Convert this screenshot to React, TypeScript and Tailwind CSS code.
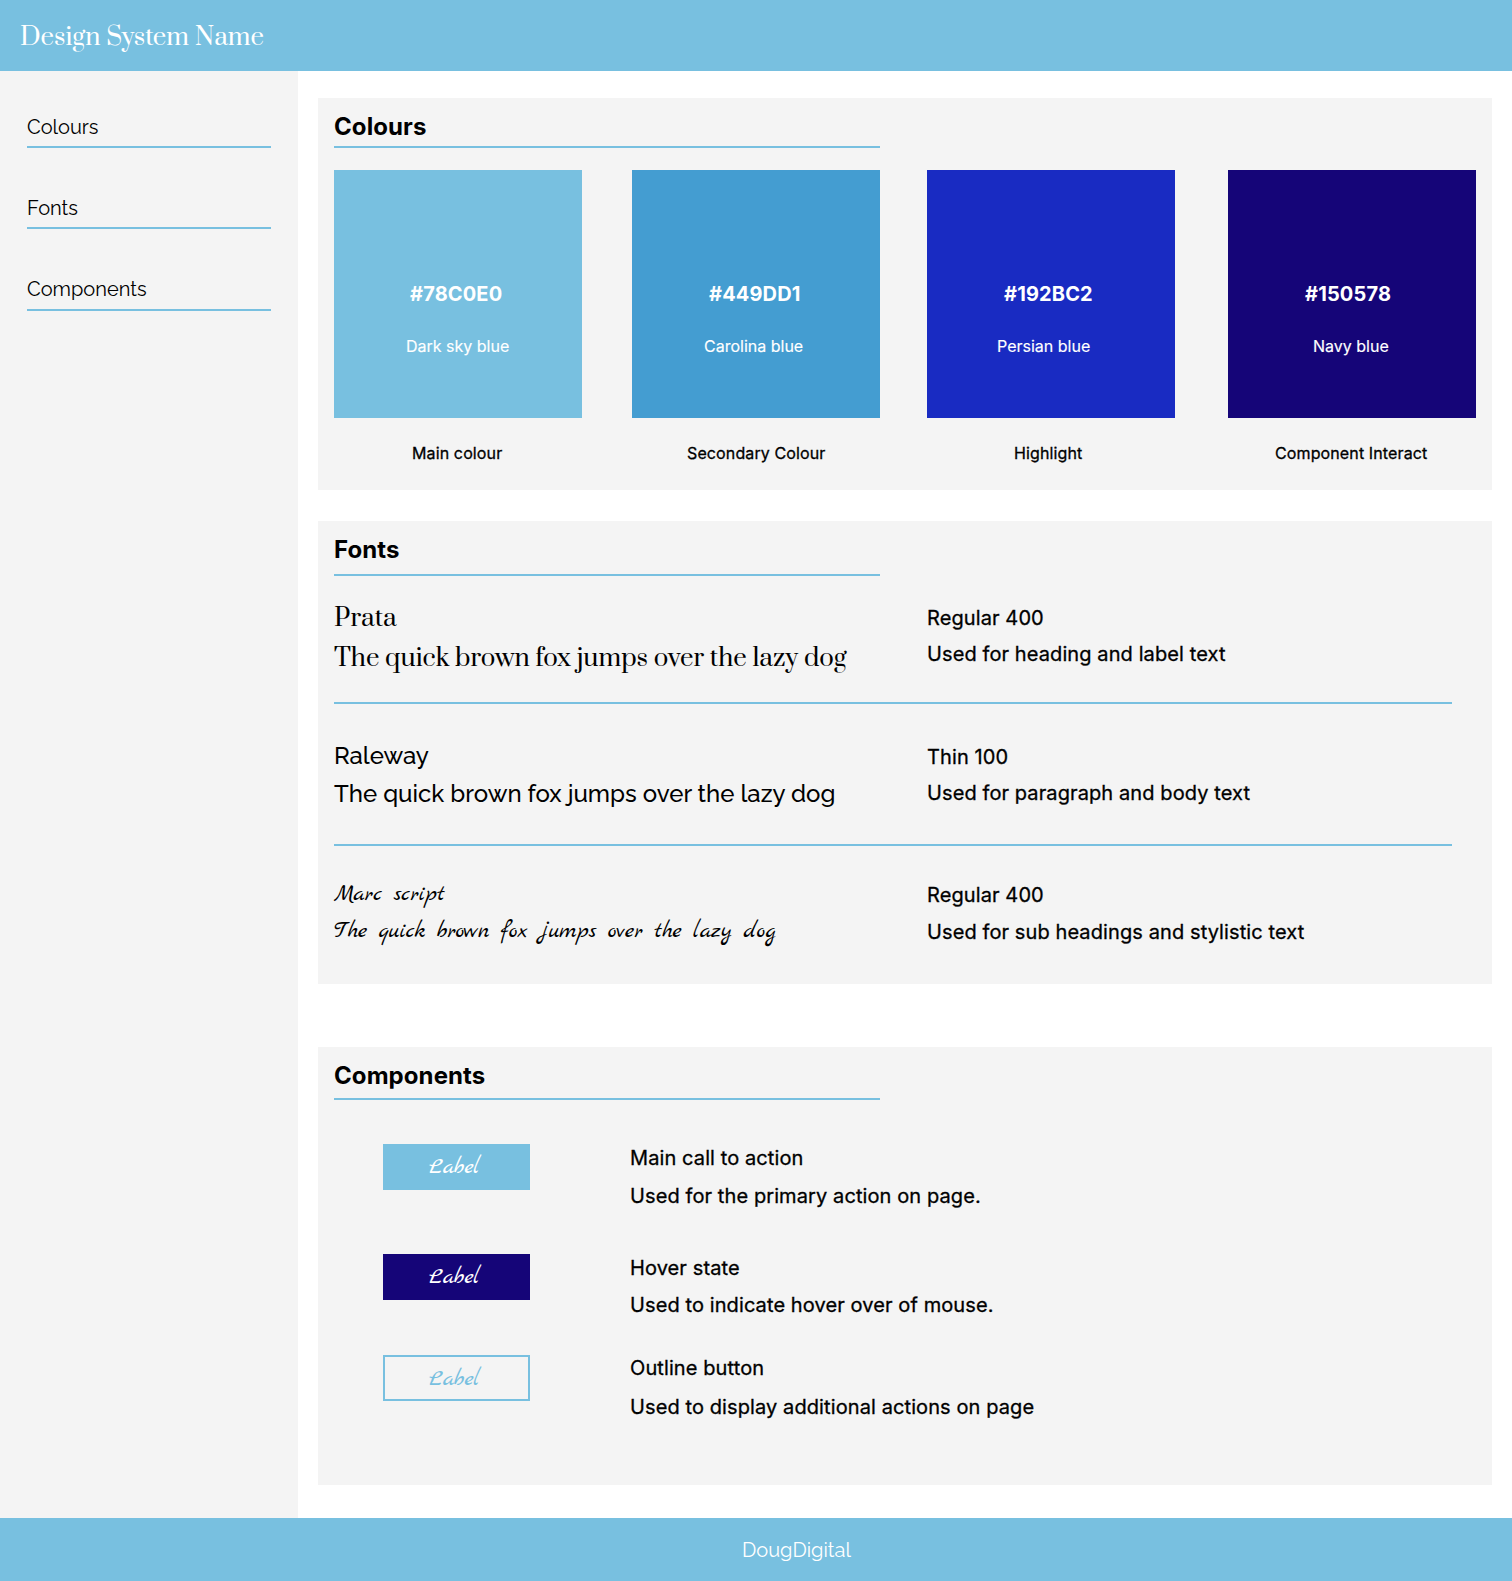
const PANGRAM = "The quick brown fox jumps over the lazy dog";

const swatches = [
  {
    hex: "#78C0E0",
    name: "Dark sky blue",
    role: "Main colour",
    fill: "bg-[#78C0E0]",
    column: "",
    hexInset: "pl-[76px]",
    nameInset: "pl-[72px]",
    roleInset: "pl-[78px]",
  },
  {
    hex: "#449DD1",
    name: "Carolina blue",
    role: "Secondary Colour",
    fill: "bg-[#449DD1]",
    column: "ml-[50px]",
    hexInset: "pl-[77px]",
    nameInset: "pl-[72px]",
    roleInset: "pl-[55px]",
  },
  {
    hex: "#192BC2",
    name: "Persian blue",
    role: "Highlight",
    fill: "bg-[#192BC2]",
    column: "ml-[47px]",
    hexInset: "pl-[77px]",
    nameInset: "pl-[70px]",
    roleInset: "pl-[87px]",
  },
  {
    hex: "#150578",
    name: "Navy blue",
    role: "Component Interact",
    fill: "bg-[#150578]",
    column: "ml-[53px]",
    hexInset: "pl-[77px]",
    nameInset: "pl-[85px]",
    roleInset: "pl-[47px]",
  },
];

const prata = "font-[Prata,'Liberation_Serif',serif]";
const raleway = "font-[Raleway,Lato,sans-serif]";
const marck = "font-['Marck_Script',cursive]";
const body =
  "text-[20px] leading-6 font-normal tracking-[0.1px] [-webkit-text-stroke:0.3px_currentColor]";

function NavLink({ label, className = "" }: { label: string; className?: string }) {
  return (
    <a
      className={`block border-b-2 border-[#78C0E0] text-[20px] leading-6 ${raleway} ${className}`}
    >
      {label}
    </a>
  );
}

function SectionTitle({ children, className }: { children: string; className: string }) {
  return (
    <h2
      className={`w-[546px] border-b-2 border-[#78C0E0] text-[24px] leading-[29px] font-bold tracking-[0.08px] ${className}`}
    >
      {children}
    </h2>
  );
}

function LabelButton({ className }: { className: string }) {
  return (
    <button
      className={`h-[46px] w-[147px] pr-[4px] text-[24px] leading-[30px] font-normal ${marck} ${className}`}
    >
      Label
    </button>
  );
}

export default function App() {
  return (
    <div className="flex h-[1581px] w-[1512px] flex-col bg-white font-[Inter,sans-serif] text-black">
      <header className="h-[71px] shrink-0 bg-[#78C0E0] pt-[21px] pl-[20px]">
        <h1 className={`text-[24px] leading-[33px] text-white ${prata}`}>Design System Name</h1>
      </header>

      <div className="flex min-h-0 flex-1">
        <nav className="w-[298px] shrink-0 bg-[#F4F4F4] px-[27px] pt-[44px]">
          <NavLink label="Colours" className="pb-[7px]" />
          <NavLink label="Fonts" className="mt-12 pb-[7px]" />
          <NavLink label="Components" className="mt-12 pb-2" />
        </nav>

        <main className="ml-5 w-[1174px] pt-[27px]">
          <section className="h-[392px] bg-[#F4F4F4] px-4 pt-[14px]">
            <SectionTitle className="pb-[5px]">Colours</SectionTitle>
            <div className="mt-[22px] flex">
              {swatches.map((s) => (
                <div key={s.hex} className={`w-[248px] shrink-0 ${s.column}`}>
                  <div className={`h-[248px] pt-[112px] text-white ${s.fill}`}>
                    <p
                      className={`text-[20px] leading-6 font-bold tracking-[0.15px] ${s.hexInset}`}
                    >
                      {s.hex}
                    </p>
                    <p
                      className={`mt-[30px] text-[16px] leading-5 [-webkit-text-stroke:0.15px_currentColor] ${s.nameInset}`}
                    >
                      {s.name}
                    </p>
                  </div>
                  <p
                    className={`mt-[25px] text-[16px] leading-5 tracking-[0.12px] [-webkit-text-stroke:0.3px_currentColor] ${s.roleInset}`}
                  >
                    {s.role}
                  </p>
                </div>
              ))}
            </div>
          </section>

          <section className="mt-[31px] h-[463px] bg-[#F4F4F4] px-4 pt-[14px]">
            <SectionTitle className="pb-[10px]">Fonts</SectionTitle>

            <div className="flex h-[128px] w-[1118px] border-b-2 border-[#78C0E0] pt-[26px]">
              <div className={`w-[593px] text-[24px] leading-[33px] ${prata}`}>
                <p>Prata</p>
                <p className="mt-[7px]">{PANGRAM}</p>
              </div>
              <div className={`pt-[4px] ${body}`}>
                <p>Regular 400</p>
                <p className="mt-[12px]">Used for heading and label text</p>
              </div>
            </div>

            <div className="flex h-[142px] w-[1118px] border-b-2 border-[#78C0E0] pt-[38px]">
              <div className={`w-[593px] text-[24px] leading-[28px] font-medium ${raleway}`}>
                <p>Raleway</p>
                <p className="mt-[10px]">{PANGRAM}</p>
              </div>
              <div className={`pt-[3px] ${body}`}>
                <p>Thin 100</p>
                <p className="mt-[12px]">Used for paragraph and body text</p>
              </div>
            </div>

            <div className="flex w-[1118px] pt-[33px]">
              <div className={`w-[593px] text-[24px] leading-[30px] ${marck}`}>
                <p>Marc script</p>
                <p className="mt-[7px]">{PANGRAM}</p>
              </div>
              <div className={`pt-[4px] ${body}`}>
                <p>Regular 400</p>
                <p className="mt-[13px]">Used for sub headings and stylistic text</p>
              </div>
            </div>
          </section>

          <section className="mt-[63px] h-[438px] bg-[#F4F4F4] px-4 pt-[14px]">
            <SectionTitle className="pb-[8px]">Components</SectionTitle>

            <div className="mt-[44px] flex h-[110px] pl-[49px]">
              <LabelButton className="bg-[#78C0E0] text-white" />
              <div className={`ml-[100px] pt-[2px] ${body}`}>
                <p>Main call to action</p>
                <p className="mt-[14px]">Used for the primary action on page.</p>
              </div>
            </div>
            <div className="flex h-[101px] pl-[49px]">
              <LabelButton className="bg-[#150578] text-white" />
              <div className={`ml-[100px] pt-[2px] ${body}`}>
                <p>Hover state</p>
                <p className="mt-[13px]">Used to indicate hover over of mouse.</p>
              </div>
            </div>
            <div className="flex pl-[49px]">
              <LabelButton className="border-2 border-[#78C0E0] pt-[2px] text-[#78C0E0]" />
              <div className={`ml-[100px] pt-[1px] ${body}`}>
                <p>Outline button</p>
                <p className="mt-[15px]">Used to display additional actions on page</p>
              </div>
            </div>
          </section>
        </main>
      </div>

      <footer className="h-[63px] shrink-0 bg-[#78C0E0] pt-[20px] pl-[742px]">
        <p className={`text-[20px] leading-6 text-white ${raleway}`}>DougDigital</p>
      </footer>
    </div>
  );
}
